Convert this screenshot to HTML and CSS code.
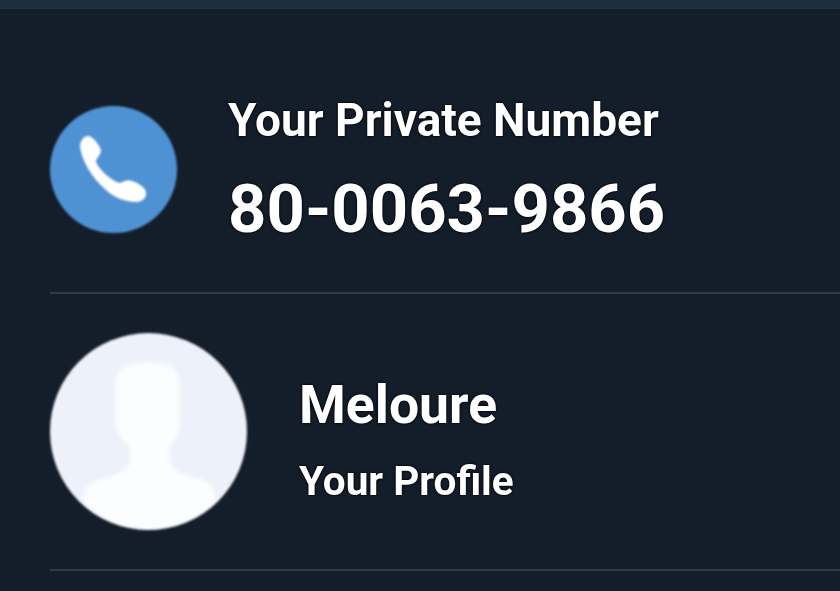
FILE: index.html
```html
<!DOCTYPE html>
<html lang="en">
<head>
    <meta charset="UTF-8">
    <title>Your Private Number</title>
    <link rel="stylesheet" href="styles.css">
</head>
<body>

<div class="top-bar"></div>

<div class="menu">
    <div class="row row-number">
        <div class="phone-badge">
            <svg class="phone-icon" viewBox="0 0 127 127">
                <path d="M30 41 C30 33 36 28 41 31 C45 33 49 39 51 44 C51 49 46 52 46 56 C50 65 62 75 70 77 C74 75 78 73 82 75 C88 77 95 81 96 86 C97 92 92 96 86 96 C75 96 63 91 56 84 C43 73 32 56 30 41 Z"/>
            </svg>
        </div>
        <div class="number-text">
            <div class="number-label">Your Private Number</div>
            <div class="number-value">80-0063-9866</div>
        </div>
    </div>

    <div class="row row-profile">
        <div class="avatar">
            <svg class="avatar-icon" viewBox="0 0 197 197">
                <path d="M80 31 C90 29 108 29 116 31 C125 33 130 42 130 52 L130 90 C130 100 124 108 120 114 L120 128 C122 135 128 139 136 142 L155 148 C162 151 165 158 166 168 C148 188 122 197 98 197 C74 197 50 188 32 168 C34 158 38 151 45 148 L64 142 C72 139 78 135 80 128 L80 114 C74 108 65 100 65 90 L65 52 C65 42 71 33 80 31 Z"/>
            </svg>
        </div>
        <div class="profile-text">
            <div class="profile-name">Meloure</div>
            <div class="profile-link">Your Profile</div>
        </div>
    </div>
</div>

</body>
</html>
```

FILE: styles.css
```css
html, body {
    margin: 0;
    height: 100%;
    overflow: hidden;
}

body {
    font-family: Roboto, "Liberation Sans", sans-serif;
    background: #141e2b;
    color: #fff;
}

.top-bar {
    height: 9px;
    background: #1e2d3e;
}

.menu {
    padding-left: 50px;
}

.row {
    display: flex;
    border-bottom: 2px solid #2c3a49;
}

.row-number {
    height: 198px;
    padding-top: 85px;
    gap: 51px;
    align-items: flex-start;
}

.row-profile {
    height: 275px;
    gap: 52px;
    align-items: center;
}

.phone-badge {
    width: 127px;
    height: 127px;
    margin-top: 12px;
    border-radius: 50%;
    background: #4f92d3;
    flex-shrink: 0;
    filter: blur(0.8px);
}

.phone-icon {
    display: block;
    width: 127px;
    height: 127px;
    fill: #fff;
}

.number-text,
.profile-text {
    text-shadow: 0 0 3px #000, 0 0 2px #000;
    filter: blur(0.4px);
}

.number-label {
    font-size: 46px;
    font-weight: 700;
    line-height: 52px;
}

.number-value {
    font-size: 67px;
    font-weight: 700;
    line-height: 78px;
    margin-top: 24px;
}

.avatar {
    width: 197px;
    height: 197px;
    border-radius: 50%;
    background: #edf1f9;
    overflow: hidden;
    flex-shrink: 0;
    filter: blur(0.8px);
}

.avatar-icon {
    display: block;
    width: 197px;
    height: 197px;
    fill: #fcfdff;
    filter: blur(2px);
}

.profile-text {
    padding-top: 16px;
}

.profile-name {
    font-size: 53.5px;
    font-weight: 700;
    line-height: 58px;
}

.profile-link {
    font-size: 40.5px;
    font-weight: 700;
    line-height: 46px;
    margin-top: 24px;
}
```
